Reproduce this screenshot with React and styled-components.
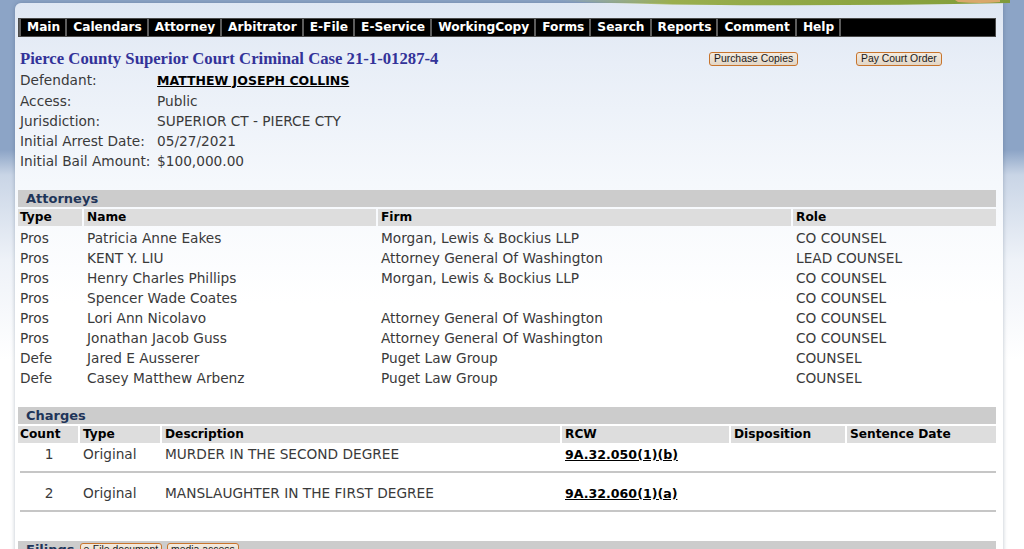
import React from "react";
import styled, { createGlobalStyle } from "styled-components";

const GlobalStyle = createGlobalStyle`
  html, body { margin: 0; padding: 0; }
  body {
    font-family: "DejaVu Sans", Verdana, sans-serif;
    font-size: 13.7px;
    color: #333;
    background:
      linear-gradient(to bottom, #8ca4c6 0px, #8ca4c6 150px, #c9d5e6 175px, #eef2f8 260px, #ffffff 360px);
    min-height: 100vh;
  }
`;

const Page = styled.div`
  position: relative;
  padding-top: 3px;
`;

const Swoosh = styled.svg`
  position: absolute;
  top: 0;
  left: 560px;
  width: 450px;
  height: 14px;
  z-index: 2;
  pointer-events: none;
`;

const Panel = styled.div`
  position: relative;
  margin: 0 21px 0 15px;
  padding: 15px 7px 40px 3px;
  background: linear-gradient(to bottom, #dfe7f3 0px, #e8eef7 60px, #f5f8fc 180px, #ffffff 300px);
  box-shadow: 0 0 4px rgba(60, 80, 110, 0.35);
  border-top-left-radius: 6px;
  min-height: 560px;
`;

const NavBar = styled.nav`
  display: flex;
  height: 19px;
  background: #000;
  border: 1px solid #4a4a4a;
  box-sizing: border-box;
`;

const NavItem = styled.a`
  display: block;
  color: #fff;
  font-weight: bold;
  font-size: 12.2px;
  line-height: 17px;
  padding: 0 5px 0 6px;
  border-left: 2px solid #5c5c5c;
  text-decoration: none;
  white-space: nowrap;
  &:last-child { border-right: 2px solid #5c5c5c; }
`;

const TitleRow = styled.div`
  display: grid;
  grid-template-columns: 689px 147px auto;
  align-items: center;
  height: 20px;
  margin-top: 12px;
  padding-left: 2px;
`;

const Title = styled.h1`
  margin: 0;
  font-family: "Liberation Serif", "Times New Roman", serif;
  font-weight: bold;
  font-size: 16.7px;
  color: #333399;
  white-space: nowrap;
`;

const ActionButton = styled.button`
  justify-self: start;
  font-family: "Liberation Sans", Arial, sans-serif;
  font-size: 10.4px;
  line-height: 12px;
  color: #1a1a1a;
  padding: 0 4px;
  height: 14px;
  background: linear-gradient(to bottom, #f3ebe0, #e2d6c6);
  border: 1px solid #c8742c;
  border-radius: 3px;
  cursor: pointer;
  white-space: nowrap;
`;

const InfoGrid = styled.div`
  display: grid;
  grid-template-columns: 137px auto;
  margin-top: 1px;
  padding-left: 2px;
  line-height: 20px;
  color: #3a3a3a;
`;

const Strong = styled.span`
  font-weight: bold;
  font-size: 12.5px;
  color: #000;
  text-decoration: underline;
`;

const Section = styled.section`
  margin-top: ${(p) => p.$gap ?? 19}px;
`;

const SectionBar = styled.div`
  display: flex;
  align-items: center;
  gap: 5px;
  height: 17px;
  background: #cccccc;
  padding-left: 8px;
  font-weight: bold;
  color: #1f3559;
  font-size: 13px;
`;

const SmallButton = styled(ActionButton)`
  padding: 0 3px;
`;

const HeadRow = styled.div`
  display: grid;
  grid-template-columns: ${(p) => p.$cols};
  column-gap: 2px;
  margin: 2px 0 ${(p) => p.$after ?? 2}px;
`;

const HeadCell = styled.div`
  background: #dddddd;
  font-weight: bold;
  font-size: 12.2px;
  color: #000;
  line-height: 17px;
  padding-left: ${(p) => p.$pad ?? 2}px;
  white-space: nowrap;
`;

const DataRow = styled.div`
  display: grid;
  grid-template-columns: ${(p) => p.$cols};
  column-gap: 2px;
  line-height: 20px;
  color: #3a3a3a;
`;

const Cell = styled.div`
  padding-left: ${(p) => p.$pad ?? 2}px;
  text-align: ${(p) => p.$align || "left"};
  white-space: nowrap;
`;

const RcwLink = styled.a`
  font-weight: bold;
  font-size: 12.6px;
  color: #000;
  text-decoration: underline;
`;

const Rule = styled.hr`
  margin: 6px 0 10px 2px;
  border: 0;
  border-top: 2px solid #c6c6c6;
  height: 0;
`;

const navItems = [
  "Main", "Calendars", "Attorney", "Arbitrator", "E-File", "E-Service",
  "WorkingCopy", "Forms", "Search", "Reports", "Comment", "Help",
];

const info = [
  ["Access:", "Public"],
  ["Jurisdiction:", "SUPERIOR CT - PIERCE CTY"],
  ["Initial Arrest Date:", "05/27/2021"],
  ["Initial Bail Amount:", "$100,000.00"],
];

const attorneys = [
  ["Pros", "Patricia Anne Eakes", "Morgan, Lewis & Bockius LLP", "CO COUNSEL"],
  ["Pros", "KENT Y. LIU", "Attorney General Of Washington", "LEAD COUNSEL"],
  ["Pros", "Henry Charles Phillips", "Morgan, Lewis & Bockius LLP", "CO COUNSEL"],
  ["Pros", "Spencer Wade Coates", "", "CO COUNSEL"],
  ["Pros", "Lori Ann Nicolavo", "Attorney General Of Washington", "CO COUNSEL"],
  ["Pros", "Jonathan Jacob Guss", "Attorney General Of Washington", "CO COUNSEL"],
  ["Defe", "Jared E Ausserer", "Puget Law Group", "COUNSEL"],
  ["Defe", "Casey Matthew Arbenz", "Puget Law Group", "COUNSEL"],
];

const charges = [
  ["1", "Original", "MURDER IN THE SECOND DEGREE", "9A.32.050(1)(b)"],
  ["2", "Original", "MANSLAUGHTER IN THE FIRST DEGREE", "9A.32.060(1)(a)"],
];

const attCols = "64px 292px 413px 1fr";
const chgCols = "60px 80px 398px 167px 114px 1fr";

export default function App() {
  return (
    <>
      <GlobalStyle />
      <Page>
        <Swoosh viewBox="0 0 450 14" preserveAspectRatio="none">
          <defs>
            <linearGradient id="g" x1="0" x2="1" y1="0" y2="0">
              <stop offset="0" stopColor="#a9bb6a" stopOpacity="0" />
              <stop offset="0.25" stopColor="#9aae4e" />
              <stop offset="0.85" stopColor="#86a03c" />
              <stop offset="1" stopColor="#7f9a3a" />
            </linearGradient>
          </defs>
          <path d="M0 0 L450 0 L450 3 Q300 6 160 5 Q60 4 0 1 Z" fill="url(#g)" />
          <path d="M395 0 L440 0 L440 2 Q420 4 398 2 Z" fill="#d9a86c" />
        </Swoosh>
        <Panel>
          <NavBar>
            {navItems.map((n) => (
              <NavItem key={n} href="#">{n}</NavItem>
            ))}
          </NavBar>

          <TitleRow>
            <Title>Pierce County Superior Court Criminal Case 21-1-01287-4</Title>
            <ActionButton>Purchase Copies</ActionButton>
            <ActionButton>Pay Court Order</ActionButton>
          </TitleRow>

          <InfoGrid>
            <span>Defendant:</span>
            <span><Strong>MATTHEW JOSEPH COLLINS</Strong></span>
            {info.map(([k, v]) => (
              <React.Fragment key={k}>
                <span>{k}</span>
                <span>{v}</span>
              </React.Fragment>
            ))}
          </InfoGrid>

          <Section>
            <SectionBar>Attorneys</SectionBar>
            <HeadRow $cols={attCols}>
              <HeadCell>Type</HeadCell>
              <HeadCell $pad={3}>Name</HeadCell>
              <HeadCell $pad={3}>Firm</HeadCell>
              <HeadCell $pad={3}>Role</HeadCell>
            </HeadRow>
            {attorneys.map((a, i) => (
              <DataRow key={i} $cols={attCols}>
                <Cell>{a[0]}</Cell>
                <Cell $pad={3}>{a[1]}</Cell>
                <Cell $pad={3}>{a[2]}</Cell>
                <Cell $pad={3}>{a[3]}</Cell>
              </DataRow>
            ))}
          </Section>

          <Section>
            <SectionBar>Charges</SectionBar>
            <HeadRow $cols={chgCols} $after={1}>
              <HeadCell>Count</HeadCell>
              <HeadCell $pad={3}>Type</HeadCell>
              <HeadCell $pad={3}>Description</HeadCell>
              <HeadCell $pad={3}>RCW</HeadCell>
              <HeadCell $pad={3}>Disposition</HeadCell>
              <HeadCell $pad={3}>Sentence Date</HeadCell>
            </HeadRow>
            {charges.map((c, i) => (
              <React.Fragment key={i}>
                <DataRow $cols={chgCols}>
                  <Cell $align="center">{c[0]}</Cell>
                  <Cell $pad={3}>{c[1]}</Cell>
                  <Cell $pad={3}>{c[2]}</Cell>
                  <Cell $pad={3}><RcwLink href="#">{c[3]}</RcwLink></Cell>
                  <Cell />
                  <Cell />
                </DataRow>
                <Rule />
              </React.Fragment>
            ))}
          </Section>

          <Section $gap={29}>
            <SectionBar>
              Filings
              <SmallButton>e-File document</SmallButton>
              <SmallButton>media access</SmallButton>
            </SectionBar>
          </Section>
        </Panel>
      </Page>
    </>
  );
}
